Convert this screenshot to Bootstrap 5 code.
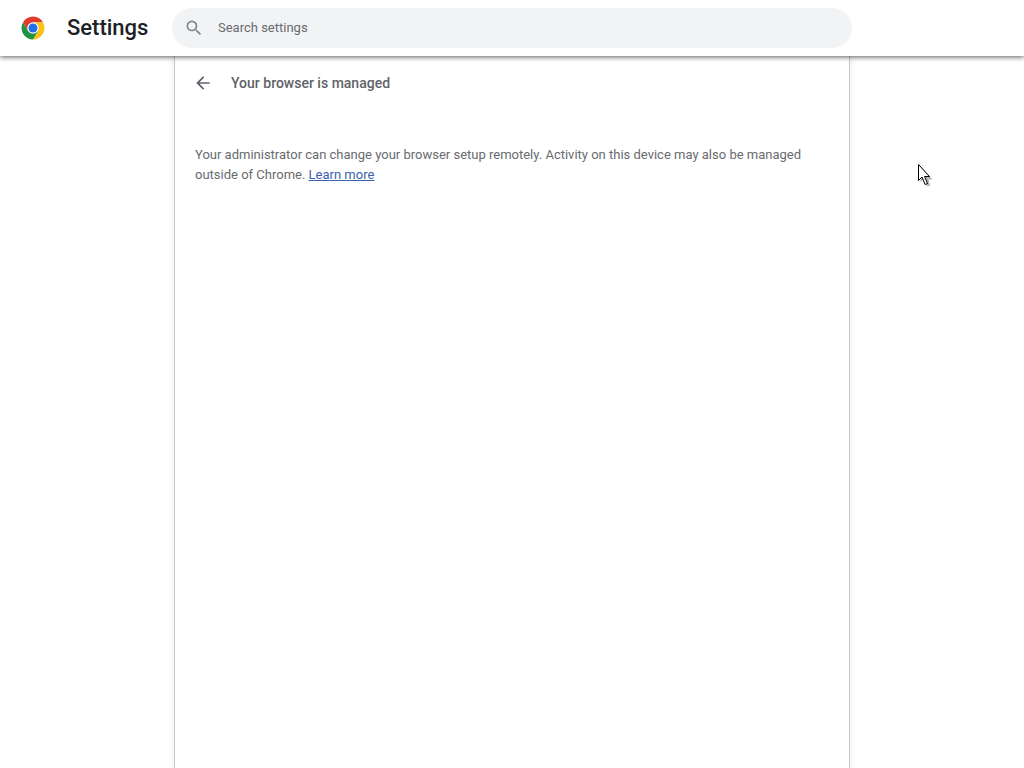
<!DOCTYPE html>
<html lang="en">
<head>
<meta charset="utf-8">
<meta name="viewport" content="width=device-width, initial-scale=1">
<title>Settings</title>
<link href="https://cdn.jsdelivr.net/npm/bootstrap@5.3.0/dist/css/bootstrap.min.css" rel="stylesheet">
<style>
  body { font-family: Roboto, "Liberation Sans", sans-serif; font-size: 13px; line-height: 20px; color: #686b70; background: #fff; }
  .toolbar { display: grid; grid-template-columns: minmax(172px, 1fr) minmax(0, 680px) 1fr; height: 56px; box-shadow: 0 1px 5px rgba(0, 0, 0, .65); z-index: 2; }
  .brand-area { padding-left: 21px; gap: 22px; }
  .brand-area h1 { font-size: 22px; line-height: 28px; font-weight: 500; color: #202124; }
  .search-field { height: 40px; padding: 0 12px; gap: 14px; background: #f1f3f4; cursor: text; }
  .search-field input { font-size: 13px; line-height: 20px; color: #202124; }
  .search-field input::placeholder { color: #686b70; opacity: 1; }
  .settings-panel { width: 100%; max-width: 676px; padding: 0 20px; border: solid #c8c9cf; border-width: 0 1px; box-shadow: 0 0 6px rgba(60, 64, 90, .12); }
  .page-head { height: 54px; gap: 16px; margin-left: -4px; }
  .page-head h2 { font-size: 14px; line-height: 20px; font-weight: 500; color: #5f6368; }
  .back-btn { width: 24px; height: 24px; color: #5f6368; }
  .notice { padding-top: 35px; }
  .notice a { color: #3a62ab; }
  .pointer { left: 918px; top: 163px; z-index: 3; pointer-events: none; }
</style>
</head>
<body class="d-flex flex-column min-vh-100">
<header class="toolbar position-relative align-items-center bg-white">
  <div class="brand-area d-flex align-items-center">
    <svg width="24" height="24" viewBox="0 0 48 48" aria-hidden="true">
      <path fill="#e0392d" d="M24 12.500H43.900A23 23 0 0 0 4.100 12.500L14 29.800 24 24z"/>
      <path fill="#fbc116" d="M24 12.500H43.900A23 23 0 0 1 24 47L34 29.800 24 24z"/>
      <path fill="#229342" d="M4.100 12.500A23 23 0 0 0 24 47L34 29.800 24 24 14 29.800z"/>
      <circle cx="24" cy="24" r="11.500" fill="#fff"/>
      <circle cx="24" cy="24" r="9" fill="#2370e6"/>
    </svg>
    <h1 class="m-0">Settings</h1>
  </div>
  <label class="search-field d-flex align-items-center rounded-pill">
    <svg width="20" height="20" viewBox="0 0 24 24" fill="#80868b" aria-hidden="true"><path d="M15.500 14h-.79l-.28-.27A6.471 6.471 0 0 0 16 9.500 6.500 6.500 0 1 0 9.500 16c1.610 0 3.090-.59 4.230-1.570l.27.280v.790l5 4.990L20.490 19l-4.990-5zm-6 0C7.010 14 5 11.990 5 9.500S7.010 5 9.500 5 14 7.010 14 9.500 11.990 14 9.500 14z"/></svg>
    <input type="search" class="flex-grow-1 border-0 bg-transparent p-0" placeholder="Search settings" aria-label="Search settings">
  </label>
</header>
<main class="settings-panel flex-grow-1 mx-auto bg-white">
  <div class="page-head d-flex align-items-center">
    <button type="button" class="back-btn btn p-0 border-0 d-flex align-items-center justify-content-center" aria-label="Back">
      <svg width="20" height="20" viewBox="0 0 24 24" fill="currentColor" aria-hidden="true"><path d="M20 11H7.830l5.590-5.590L12 4l-8 8 8 8 1.410-1.410L7.830 13H20v-2z"/></svg>
    </button>
    <h2 class="m-0">Your browser is managed</h2>
  </div>
  <p class="notice m-0">Your administrator can change your browser setup remotely. Activity on this device may also be managed outside of Chrome. <a href="#">Learn more</a></p>
</main>
<svg class="pointer position-absolute" width="16" height="24" viewBox="0 0 16 24" aria-hidden="true">
  <path d="M2.500 3v16l3.500-3 3 7h3l-1.500-6.500h4z" fill="#000" opacity=".3"/>
  <path d="M.5 1.500v16l3.500-3.500 3 7.500 2.500-1-3-7h5z" fill="#fff" stroke="#000"/>
</svg>
<script src="https://cdn.jsdelivr.net/npm/bootstrap@5.3.0/dist/js/bootstrap.bundle.min.js"></script>
</body>
</html>
